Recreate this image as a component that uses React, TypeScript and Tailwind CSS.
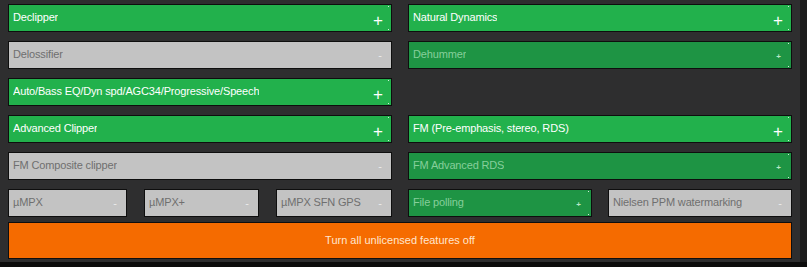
import React from 'react';

type Kind = 'on' | 'avail' | 'off';

// on = licensed + enabled (bright green), avail = licensed but idle (dark green), off = unlicensed (grey)
const styles: Record<Kind, { box: string; text: string; mark: string }> = {
  on: { box: 'bg-[#22b14c]', text: 'text-white', mark: 'text-white' },
  avail: { box: 'bg-[#1e9444]', text: 'text-[#86cf9b]', mark: 'text-[#b9e8c6]' },
  off: { box: 'bg-[#c3c3c3]', text: 'text-[#6f6f6f]', mark: 'text-[#ececec]' },
};

const Feature = ({ label, kind }: { label: string; kind: Kind }) => {
  const s = styles[kind];
  return (
    <div className={`relative flex h-[28px] items-center justify-between border border-[#0e0e0e] pl-[4px] pr-[8px] ${s.box}`}>
      <span className={`truncate pb-[2px] tracking-[-0.15px] ${s.text}`}>{label}</span>
      {kind === 'on' && <span className={`mt-[5px] text-[17px] font-light leading-none ${s.mark}`}>+</span>}
      {kind === 'avail' && <span className={`mt-[3px] mr-[2px] text-[8px] font-bold leading-none ${s.mark}`}>+</span>}
      {kind === 'off' && <span className={`mr-[1px] text-[11px] leading-none ${s.mark}`}>-</span>}
      {kind !== 'off' && (
        <>
          <span className="absolute right-[2px] top-[1px] h-px w-px bg-white/80" />
          <span className="absolute bottom-[1px] right-[2px] h-px w-px bg-white/80" />
        </>
      )}
    </div>
  );
};

export default function App() {
  return (
    <div className="flex h-[267px] w-[807px] flex-col bg-[#0c0c0c] font-['Liberation_Sans',Arial,sans-serif] text-[11px]">
      <div className="flex h-[262px]">
        <div className="flex w-[800px] flex-col gap-[9px] bg-[#2e2e2f] px-[8px] pt-[4px]">
          <div className="grid grid-cols-2 gap-4">
            <Feature label="Declipper" kind="on" />
            <Feature label="Natural Dynamics" kind="on" />
          </div>
          <div className="grid grid-cols-2 gap-4">
            <Feature label="Delossifier" kind="off" />
            <Feature label="Dehummer" kind="avail" />
          </div>
          <div className="grid grid-cols-2 gap-4">
            <Feature label="Auto/Bass EQ/Dyn spd/AGC34/Progressive/Speech" kind="on" />
          </div>
          <div className="grid grid-cols-2 gap-4">
            <Feature label="Advanced Clipper" kind="on" />
            <Feature label="FM (Pre-emphasis, stereo, RDS)" kind="on" />
          </div>
          <div className="grid grid-cols-2 gap-4">
            <Feature label="FM Composite clipper" kind="off" />
            <Feature label="FM Advanced RDS" kind="avail" />
          </div>
          <div className="grid grid-cols-2 gap-4">
            <div className="grid grid-cols-[119px_115px_116px] gap-[17px]">
              <Feature label="µMPX" kind="off" />
              <Feature label="µMPX+" kind="off" />
              <Feature label="µMPX SFN GPS" kind="off" />
            </div>
            <div className="grid grid-cols-2 gap-4">
              <Feature label="File polling" kind="avail" />
              <Feature label="Nielsen PPM watermarking" kind="off" />
            </div>
          </div>
          <button className="-mt-[4px] flex h-[37px] items-center justify-center border border-[#0e0e0e] bg-[#f56b00] pb-[1px] text-[#ffe6cf]">
            Turn all unlicensed features off
          </button>
        </div>
        <div className="flex-1 bg-[#1c1c1d]" />
      </div>
    </div>
  );
}
